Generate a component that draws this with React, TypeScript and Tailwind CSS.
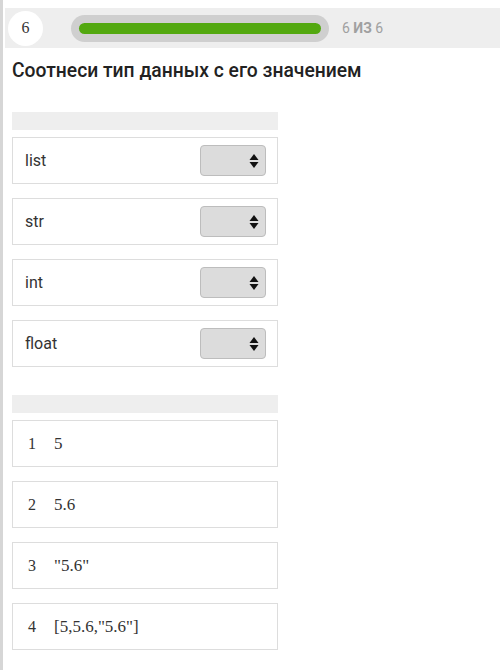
import React from "react";

const types = ["list", "str", "int", "float"];
const values = ["5", "5.6", '"5.6"', '[5,5.6,"5.6"]'];

function SelectBox() {
  return (
    <div className="flex h-[31px] w-[66px] items-center justify-end rounded-[4px] border border-[#bdbdbd] bg-[#dcdcdc] pr-[6px]">
      <svg width="10" height="16" viewBox="0 0 10 16">
        <path d="M5 1 L9.5 7 H0.5 Z" fill="#111" />
        <path d="M5 15 L9.5 9 H0.5 Z" fill="#111" />
      </svg>
    </div>
  );
}

export default function App() {
  return (
    <div className="min-h-[670px] w-[500px] border-l-[3px] border-[#d6d6d6] bg-white" style={{ fontFamily: "Roboto, 'Noto Sans', sans-serif" }}>
      <div className="pt-[8px]">
        <div className="ml-[2px] flex h-[40px] items-center bg-[#eeeeee] pl-[3px]">
          <div className="flex h-[35px] w-[35px] items-center justify-center rounded-full bg-white text-[16px] text-[#333]" style={{ fontFamily: "'Liberation Serif', serif" }}>
            6
          </div>
          <div className="ml-[28px] flex h-[27px] w-[258px] items-center rounded-full bg-[#cfcfcf] px-[8px]">
            <div className="h-[11px] w-full rounded-full bg-[#52a80f]" />
          </div>
          <div className="ml-[13px] text-[14px] text-[#a0a0a0]">
            6 <span className="font-bold">ИЗ</span> 6
          </div>
        </div>
      </div>
      <h1 className="ml-[9px] mt-[11px] text-[19.3px] font-medium leading-[24px] text-[#222]">
        Соотнеси тип данных с его значением
      </h1>
      <div className="ml-[9px] mt-[29px] w-[266px]">
        <div className="h-[18px] bg-[#eeeeee]" />
        <div className="mt-[7px] flex flex-col gap-[14px]">
          {types.map((t) => (
            <div key={t} className="flex h-[47px] items-center justify-between border border-[#dddddd] pl-[12px] pr-[11px]">
              <span className="text-[16px] text-[#333]">{t}</span>
              <SelectBox />
            </div>
          ))}
        </div>
        <div className="mt-[28px] h-[18px] bg-[#eeeeee]" />
        <div className="mt-[7px] flex flex-col gap-[14px]">
          {values.map((v, i) => (
            <div key={v} className="flex h-[47px] items-center border border-[#dddddd] pl-[15px] text-[17px] text-[#333]" style={{ fontFamily: "'Liberation Serif', serif" }}>
              <span className="w-[26px] text-[16px]">{i + 1}</span>
              <span>{v}</span>
            </div>
          ))}
        </div>
      </div>
    </div>
  );
}
